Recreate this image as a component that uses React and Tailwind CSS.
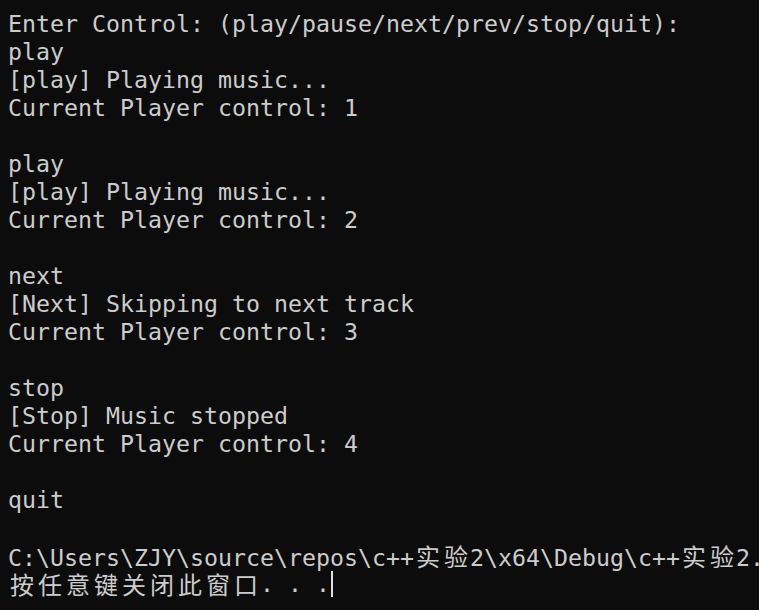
import React from "react";

const lines = [
  "Enter Control: (play/pause/next/prev/stop/quit):",
  "play",
  "[play] Playing music...",
  "Current Player control: 1",
  "",
  "play",
  "[play] Playing music...",
  "Current Player control: 2",
  "",
  "next",
  "[Next] Skipping to next track",
  "Current Player control: 3",
  "",
  "stop",
  "[Stop] Music stopped",
  "Current Player control: 4",
  "",
  "quit",
  "",
  "C:\\Users\\ZJY\\source\\repos\\c++实验2\\x64\\Debug\\c++实验2.",
];

function renderLine(text) {
  const parts = [];
  let buf = "";
  Array.from(text).forEach((ch, i) => {
    if (ch.charCodeAt(0) > 0x2e80) {
      if (buf) {
        parts.push(buf);
        buf = "";
      }
      parts.push(
        <span
          key={i}
          className="inline-block w-[28px] text-center text-[24px] font-['Noto_Sans_CJK_SC',sans-serif]"
        >
          {ch}
        </span>
      );
    } else {
      buf += ch;
    }
  });
  if (buf) parts.push(buf);
  return parts;
}

export default function App() {
  return (
    <div className="w-[759px] h-[610px] overflow-hidden bg-[#0c0c0c] text-[#cccccc] pt-[10px] pl-[8px] font-['DejaVu_Sans_Mono',monospace] text-[23.25px] leading-[28px] whitespace-pre">
      {lines.map((l, i) => (
        <div key={i} className="h-[28px]">
          {renderLine(l)}
        </div>
      ))}
      <div className="h-[28px] flex items-center">
        {renderLine("按任意键关闭此窗口")}
        <span>. . .</span>
        <span className="inline-block w-[2px] h-[26px] bg-[#e0e0e0] ml-[1px]" />
      </div>
    </div>
  );
}
